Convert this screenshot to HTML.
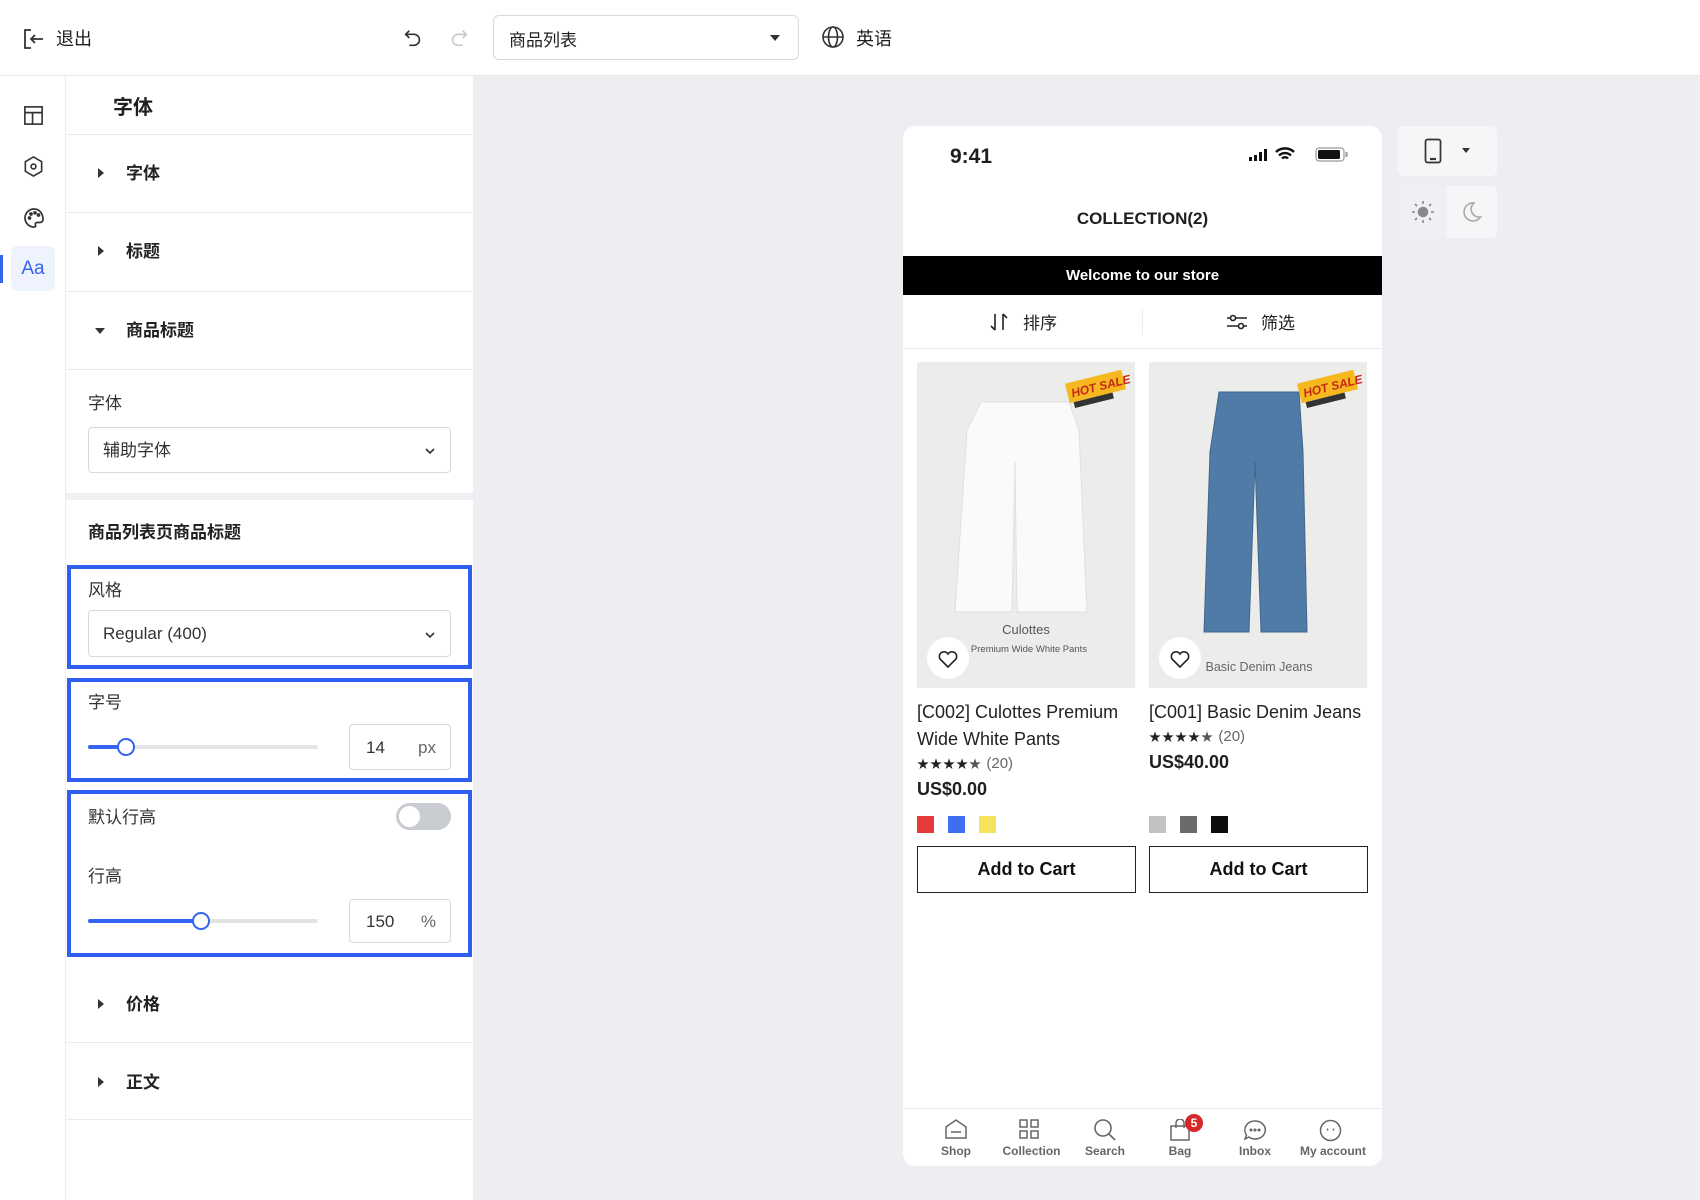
<!DOCTYPE html>
<html><head><meta charset="utf-8">
<style>
*{box-sizing:border-box;margin:0;padding:0}
body{width:1700px;height:1200px;overflow:hidden;background:#eceef2;font-family:"Liberation Sans","Noto Sans CJK SC",sans-serif;color:#1f1f1f;position:relative}
.abs{position:absolute}
.top{left:0;top:0;width:1700px;height:76px;background:#fff;border-bottom:1px solid #e8e8e8}
.icol{left:0;top:76px;width:66px;height:1124px;background:#fff;border-right:1px solid #ececec}
.panel{left:66px;top:76px;width:407px;height:1124px;background:#fff}
.row{position:absolute;left:0;width:407px;border-bottom:1px solid #ececec}
.lbl{font-size:17px;color:#333;position:absolute}
.sel{position:absolute;border:1px solid #d9d9d9;border-radius:4px;background:#fff;font-size:17px;color:#333;padding-left:14px;display:flex;align-items:center}
.bbox{position:absolute;left:67px;width:405px;border:4px solid #2f5ff0}
.slider{position:absolute;height:4px;background:#e4e4e4;border-radius:2px}
.fill{position:absolute;left:0;top:0;height:4px;background:#3464f0;border-radius:2px}
.knob{position:absolute;top:-7px;width:18px;height:18px;border:2px solid #3464f0;border-radius:50%;background:#fff}
.inp{position:absolute;border:1px solid #d9d9d9;border-radius:4px;font-size:17px;color:#333}
.phone{left:903px;top:126px;width:479px;height:1040px;background:#fff;border-radius:12px;overflow:hidden}
.arrow{display:inline-block;width:0;height:0;border-top:5px solid transparent;border-bottom:5px solid transparent;border-left:6px solid #333}
.pt{font-size:18px;line-height:27px;color:#222}
.sw{position:absolute;width:17px;height:17px}
.btn{position:absolute;height:47px;border:1.5px solid #222;font-size:18px;font-weight:bold;display:flex;align-items:center;justify-content:center;color:#111}
.nav{position:absolute;top:1000px;text-align:center;font-size:12px;font-weight:bold;color:#666;width:70px}
.stars{font-size:12px;color:#222;letter-spacing:1px}
</style></head><body>

<div class="abs top">
  <svg class="abs" style="left:22px;top:27px" width="24" height="24" viewBox="0 0 24 24" fill="none" stroke="#333" stroke-width="1.8"><path d="M9 3H3v18h6"/><path d="M21 12H9M13 8l-4 4 4 4"/></svg>
  <div class="abs" style="left:56px;top:25px;font-size:18px">退出</div>
  <svg class="abs" style="left:402px;top:27px" width="22" height="22" viewBox="0 0 24 24" fill="none" stroke="#333" stroke-width="1.8"><path d="M8 4L4 8l4 4"/><path d="M4 8h9a6 6 0 010 12H8"/></svg>
  <svg class="abs" style="left:448px;top:27px" width="22" height="22" viewBox="0 0 24 24" fill="none" stroke="#c8c8c8" stroke-width="1.8"><path d="M16 4l4 4-4 4"/><path d="M20 8h-9a6 6 0 000 12h5"/></svg>
  <div class="abs" style="left:493px;top:15px;width:306px;height:45px;border:1px solid #d9d9d9;border-radius:6px;font-size:17px;padding:10px 0 0 15px">商品列表
    <span class="abs" style="right:18px;top:19px;width:0;height:0;border-left:5px solid transparent;border-right:5px solid transparent;border-top:6px solid #333"></span></div>
  <svg class="abs" style="left:821px;top:25px" width="24" height="24" viewBox="0 0 24 24" fill="none" stroke="#333" stroke-width="1.6"><circle cx="12" cy="12" r="10"/><ellipse cx="12" cy="12" rx="4.5" ry="10"/><path d="M2 12h20"/></svg>
  <div class="abs" style="left:856px;top:25px;font-size:18px">英语</div>
</div>

<div class="abs icol">
  <svg class="abs" style="left:22px;top:28px" width="23" height="23" viewBox="0 0 24 24" fill="none" stroke="#333" stroke-width="1.7"><rect x="3" y="3" width="18" height="18"/><path d="M3 9h18M11 9v12"/></svg>
  <svg class="abs" style="left:22px;top:79px" width="23" height="23" viewBox="0 0 24 24" fill="none" stroke="#333" stroke-width="1.7"><path d="M12 2l8.5 5v10L12 22l-8.5-5V7z"/><circle cx="12" cy="12" r="2.5"/></svg>
  <svg class="abs" style="left:22px;top:130px" width="24" height="24" viewBox="0 0 24 24" fill="none" stroke="#333" stroke-width="1.7"><path d="M12 3a9 9 0 100 18c1.5 0 2-1 1.5-2-.6-1.3.2-2.5 1.6-2.5H18a3 3 0 003-3C21 7 17 3 12 3z"/><circle cx="7.5" cy="12" r="1" fill="#333"/><circle cx="9" cy="8" r="1" fill="#333"/><circle cx="13" cy="6.8" r="1" fill="#333"/><circle cx="16.5" cy="9" r="1" fill="#333"/></svg>
  <div class="abs" style="left:11px;top:170px;width:44px;height:45px;background:#eef3fd;border-radius:6px;color:#3464f0;font-size:19px;text-align:center;line-height:45px">Aa</div>
  <div class="abs" style="left:0;top:179px;width:3px;height:28px;background:#3464f0"></div>
</div>

<div class="abs panel">
  <div class="row" style="top:0;height:59px"><div class="abs" style="left:47px;top:15px;font-size:20px;font-weight:bold">字体</div></div>
  <div class="row" style="top:59px;height:78px"><span class="arrow abs" style="left:32px;top:33px"></span><div class="lbl" style="left:60px;top:24px;font-weight:bold;color:#222">字体</div></div>
  <div class="row" style="top:137px;height:79px"><span class="arrow abs" style="left:32px;top:33px"></span><div class="lbl" style="left:60px;top:24px;font-weight:bold;color:#222">标题</div></div>
  <div class="row" style="top:216px;height:78px"><span class="abs" style="left:29px;top:36px;width:0;height:0;border-left:5px solid transparent;border-right:5px solid transparent;border-top:6px solid #333"></span><div class="lbl" style="left:60px;top:24px;font-weight:bold;color:#222">商品标题</div></div>
  <div class="lbl" style="left:22px;top:313px">字体</div>
  <div class="sel" style="left:22px;top:351px;width:363px;height:46px"><span style="margin-top:-3px">辅助字体</span><svg class="abs" style="right:14px;top:17px" width="12" height="12" viewBox="0 0 12 12" fill="none" stroke="#333" stroke-width="1.6"><path d="M2 4l4 4 4-4"/></svg></div>
  <div class="abs" style="left:0;top:417px;width:407px;height:7px;background:#eef0f3"></div>
  <div class="lbl" style="left:22px;top:442px;font-weight:bold;color:#222">商品列表页商品标题</div>
</div>

<div class="bbox" style="top:565px;height:104px"></div>
<div class="lbl" style="left:88px;top:576px">风格</div>
<div class="sel" style="left:88px;top:610px;width:363px;height:47px">Regular (400)<svg class="abs" style="right:14px;top:18px" width="12" height="12" viewBox="0 0 12 12" fill="none" stroke="#333" stroke-width="1.6"><path d="M2 4l4 4 4-4"/></svg></div>

<div class="bbox" style="top:678px;height:104px"></div>
<div class="lbl" style="left:88px;top:688px">字号</div>
<div class="slider" style="left:88px;top:745px;width:230px"><div class="fill" style="width:38px"></div><div class="knob" style="left:29px"></div></div>
<div class="inp" style="left:349px;top:724px;width:102px;height:46px"><span class="abs" style="left:16px;top:13px">14</span><span class="abs" style="right:14px;top:13px;color:#666">px</span></div>

<div class="bbox" style="top:790px;height:167px"></div>
<div class="lbl" style="left:88px;top:803px">默认行高</div>
<div class="abs" style="left:396px;top:803px;width:55px;height:27px;background:#c9ccd1;border-radius:14px"><div class="abs" style="left:3px;top:3px;width:21px;height:21px;background:#fff;border-radius:50%"></div></div>
<div class="lbl" style="left:88px;top:862px">行高</div>
<div class="slider" style="left:88px;top:919px;width:230px"><div class="fill" style="width:115px"></div><div class="knob" style="left:104px"></div></div>
<div class="inp" style="left:349px;top:899px;width:102px;height:44px"><span class="abs" style="left:16px;top:12px">150</span><span class="abs" style="right:14px;top:12px;color:#666">%</span></div>

<div class="abs" style="left:66px;top:962px;width:407px;height:81px;border-bottom:1px solid #ececec"><span class="arrow abs" style="left:32px;top:37px"></span><div class="lbl" style="left:60px;top:28px;font-weight:bold;color:#222">价格</div></div>
<div class="abs" style="left:66px;top:1043px;width:407px;height:77px;border-bottom:1px solid #ececec"><span class="arrow abs" style="left:32px;top:34px"></span><div class="lbl" style="left:60px;top:25px;font-weight:bold;color:#222">正文</div></div>

<div class="abs phone">
  <div class="abs" style="left:47px;top:19px;font-size:21px;font-weight:bold">9:41</div>
  <svg class="abs" style="left:346px;top:22px" width="20" height="13" viewBox="0 0 20 13" fill="#111"><rect x="0" y="9" width="3" height="4"/><rect x="5" y="7" width="3" height="6"/><rect x="10" y="4" width="3" height="9"/><rect x="15" y="1" width="3" height="12"/></svg>
  <svg class="abs" style="left:371px;top:20px" width="22" height="16" viewBox="0 0 22 16" fill="none" stroke="#111" stroke-width="2.4"><path d="M2 6a13 13 0 0118 0M5 9.5a8.5 8.5 0 0112 0M8 12.5a4 4 0 016 0"/></svg>
  <svg class="abs" style="left:412px;top:21px" width="34" height="15" viewBox="0 0 34 15"><rect x="1" y="1" width="28" height="13" rx="3" fill="none" stroke="#999" stroke-width="1.2"/><rect x="3" y="3" width="22" height="9" rx="1.5" fill="#111"/><rect x="30.5" y="5" width="2" height="5" fill="#999"/></svg>
  <div class="abs" style="left:0;top:83px;width:479px;text-align:center;font-size:17px;font-weight:bold">COLLECTION(2)</div>
  <div class="abs" style="left:0;top:130px;width:479px;height:39px;background:#000;color:#fff;font-size:15px;font-weight:bold;text-align:center;line-height:39px">Welcome to our store</div>
  <div class="abs" style="left:0;top:169px;width:479px;height:54px;border-bottom:1px solid #ececec"></div>
  <div class="abs" style="left:239px;top:183px;width:1px;height:26px;background:#eee"></div>
  <svg class="abs" style="left:86px;top:186px" width="20" height="20" viewBox="0 0 20 20" fill="none" stroke="#222" stroke-width="1.6"><path d="M6 2v16M2 14l4 4M14 18V2M18 6l-4-4"/></svg>
  <div class="abs" style="left:120px;top:183px;font-size:17px">排序</div>
  <svg class="abs" style="left:323px;top:186px" width="22" height="20" viewBox="0 0 22 20" fill="none" stroke="#222" stroke-width="1.6"><path d="M1 6h20M1 14h20"/><circle cx="7" cy="6" r="2.5" fill="#fff"/><circle cx="15" cy="14" r="2.5" fill="#fff"/></svg>
  <div class="abs" style="left:358px;top:183px;font-size:17px">筛选</div>

  <div class="abs" style="left:14px;top:236px;width:218px;height:326px;background:#ececea;overflow:hidden">
    <svg width="218" height="326" viewBox="0 0 218 326"><path d="M64 40h88l10 28 8 182h-70l-2-150-3 150H38l12-182z" fill="#fafafa" stroke="#e0e0e0"/>
    <g transform="translate(146,14) rotate(-14)"><rect x="0" y="8" width="58" height="20" fill="#f5b81e"/><text x="4" y="23" font-size="12" font-weight="bold" font-style="italic" fill="#c8261a" font-family="Liberation Sans">HOT SALE</text><rect x="4" y="28" width="40" height="6" fill="#333"/></g>
    <text x="109" y="272" text-anchor="middle" font-size="13" fill="#555" font-family="Liberation Sans">Culottes</text>
    <text x="112" y="290" text-anchor="middle" font-size="9.5" fill="#555" font-family="Liberation Sans">Premium Wide White Pants</text>
    <circle cx="31" cy="296" r="21" fill="#fff"/><path d="M31 305l-8-8a4.5 4.5 0 018-5 4.5 4.5 0 018 5z" fill="none" stroke="#222" stroke-width="1.6"/></svg>
  </div>
  <div class="abs pt" style="left:14px;top:573px;width:220px">[C002] Culottes Premium Wide White Pants</div>
  <div class="abs stars" style="left:14px;top:629px">★★★★<span style="color:#555">★</span> <span style="color:#666;font-size:15px;letter-spacing:0">(20)</span></div>
  <div class="abs" style="left:14px;top:653px;font-size:18px;font-weight:bold">US$0.00</div>
  <div class="sw" style="left:14px;top:690px;background:#e53b3b"></div>
  <div class="sw" style="left:45px;top:690px;background:#3f6ef0"></div>
  <div class="sw" style="left:76px;top:690px;background:#f7e35a"></div>
  <div class="btn" style="left:14px;top:720px;width:219px">Add to Cart</div>

  <div class="abs" style="left:246px;top:236px;width:218px;height:326px;background:#ececea;overflow:hidden">
    <svg width="218" height="326" viewBox="0 0 218 326"><path d="M70 30h80l4 60 4 180h-46l-6-170-6 170H55l6-180z" fill="#4f7ba6" stroke="#3f678d"/>
    <g transform="translate(146,14) rotate(-14)"><rect x="0" y="8" width="58" height="20" fill="#f5b81e"/><text x="4" y="23" font-size="12" font-weight="bold" font-style="italic" fill="#c8261a" font-family="Liberation Sans">HOT SALE</text><rect x="4" y="28" width="40" height="6" fill="#333"/></g>
    <text x="110" y="309" text-anchor="middle" font-size="12.5" fill="#666" font-family="Liberation Sans">Basic Denim Jeans</text>
    <circle cx="31" cy="296" r="21" fill="#fff"/><path d="M31 305l-8-8a4.5 4.5 0 018-5 4.5 4.5 0 018 5z" fill="none" stroke="#222" stroke-width="1.6"/></svg>
  </div>
  <div class="abs pt" style="left:246px;top:573px;width:225px">[C001] Basic Denim Jeans</div>
  <div class="abs stars" style="left:246px;top:602px">★★★★<span style="color:#555">★</span> <span style="color:#666;font-size:15px;letter-spacing:0">(20)</span></div>
  <div class="abs" style="left:246px;top:626px;font-size:18px;font-weight:bold">US$40.00</div>
  <div class="sw" style="left:246px;top:690px;background:#c2c2c2"></div>
  <div class="sw" style="left:277px;top:690px;background:#6b6b6b"></div>
  <div class="sw" style="left:308px;top:690px;background:#0c0c0c"></div>
  <div class="btn" style="left:246px;top:720px;width:219px">Add to Cart</div>

  <div class="abs" style="left:0;top:982px;width:479px;height:1px;background:#ececec"></div>
  <svg class="abs" style="left:41px;top:992px" width="24" height="22" viewBox="0 0 24 22" fill="none" stroke="#666" stroke-width="1.5"><path d="M2 9L12 2l10 7v11H2z"/><path d="M7 14h10"/></svg>
  <svg class="abs" style="left:115px;top:992px" width="22" height="22" viewBox="0 0 22 22" fill="none" stroke="#666" stroke-width="1.5"><rect x="2" y="2" width="7" height="7"/><rect x="13" y="2" width="7" height="7"/><rect x="2" y="13" width="7" height="7"/><rect x="13" y="13" width="7" height="7"/></svg>
  <svg class="abs" style="left:190px;top:992px" width="24" height="23" viewBox="0 0 24 23" fill="none" stroke="#666" stroke-width="1.6"><circle cx="10" cy="10" r="8"/><path d="M16 16l6 6"/></svg>
  <svg class="abs" style="left:265px;top:993px" width="24" height="22" viewBox="0 0 24 22" fill="none" stroke="#666" stroke-width="1.5"><path d="M3 7h18v14H3z"/><path d="M8 9V4a4 4 0 018 0v5"/></svg>
  <div class="abs" style="left:282px;top:988px;width:18px;height:18px;border-radius:50%;background:#d62828;color:#fff;font-size:12px;font-weight:bold;text-align:center;line-height:18px">5</div>
  <svg class="abs" style="left:340px;top:993px" width="24" height="23" viewBox="0 0 24 23" fill="none" stroke="#666" stroke-width="1.5"><path d="M12 2a10 9 0 11-6 16l-4 2 1.5-4A10 9 0 0112 2z"/><circle cx="8" cy="11" r=".8" fill="#666"/><circle cx="12" cy="11" r=".8" fill="#666"/><circle cx="16" cy="11" r=".8" fill="#666"/></svg>
  <svg class="abs" style="left:416px;top:993px" width="23" height="23" viewBox="0 0 23 23" fill="none" stroke="#666" stroke-width="1.5"><circle cx="11.5" cy="11.5" r="10"/><path d="M8.5 9.5v2M14.5 9.5v2"/></svg>
  <div class="nav" style="left:18px;top:1018px">Shop</div>
  <div class="nav" style="left:91px;top:1018px;width:75px">Collection</div>
  <div class="nav" style="left:167px;top:1018px">Search</div>
  <div class="nav" style="left:242px;top:1018px">Bag</div>
  <div class="nav" style="left:317px;top:1018px">Inbox</div>
  <div class="nav" style="left:385px;top:1018px;width:90px">My account</div>
</div>

<div class="abs" style="left:1398px;top:126px;width:99px;height:50px;background:#f5f6f8;border-radius:6px">
  <svg class="abs" style="left:26px;top:12px" width="18" height="26" viewBox="0 0 18 26" fill="none" stroke="#333" stroke-width="1.7"><rect x="1.5" y="1.5" width="15" height="23" rx="2"/><path d="M6 21h6" stroke-width="2.2"/></svg>
  <span class="abs" style="left:64px;top:22px;width:0;height:0;border-left:4px solid transparent;border-right:4px solid transparent;border-top:5px solid #333"></span>
</div>
<div class="abs" style="left:1398px;top:186px;width:99px;height:52px;background:#f5f6f8;border-radius:6px">
  <div class="abs" style="left:0;top:0;width:49px;height:52px;background:#eef0f3;border-radius:6px 0 0 6px"></div>
  <svg class="abs" style="left:13px;top:14px" width="24" height="24" viewBox="0 0 24 24" stroke="#888" stroke-width="1.6"><circle cx="12" cy="12" r="4.5" fill="#888"/><path d="M12 1v3M12 20v3M1 12h3M20 12h3M4 4l2 2M18 18l2 2M4 20l2-2M18 6l2-2"/></svg>
  <svg class="abs" style="left:62px;top:14px" width="24" height="24" viewBox="0 0 24 24" fill="none" stroke="#aaa" stroke-width="1.6"><path d="M14 3a9 9 0 106.5 14A8 8 0 0114 3z"/></svg>
</div>

</body></html>
